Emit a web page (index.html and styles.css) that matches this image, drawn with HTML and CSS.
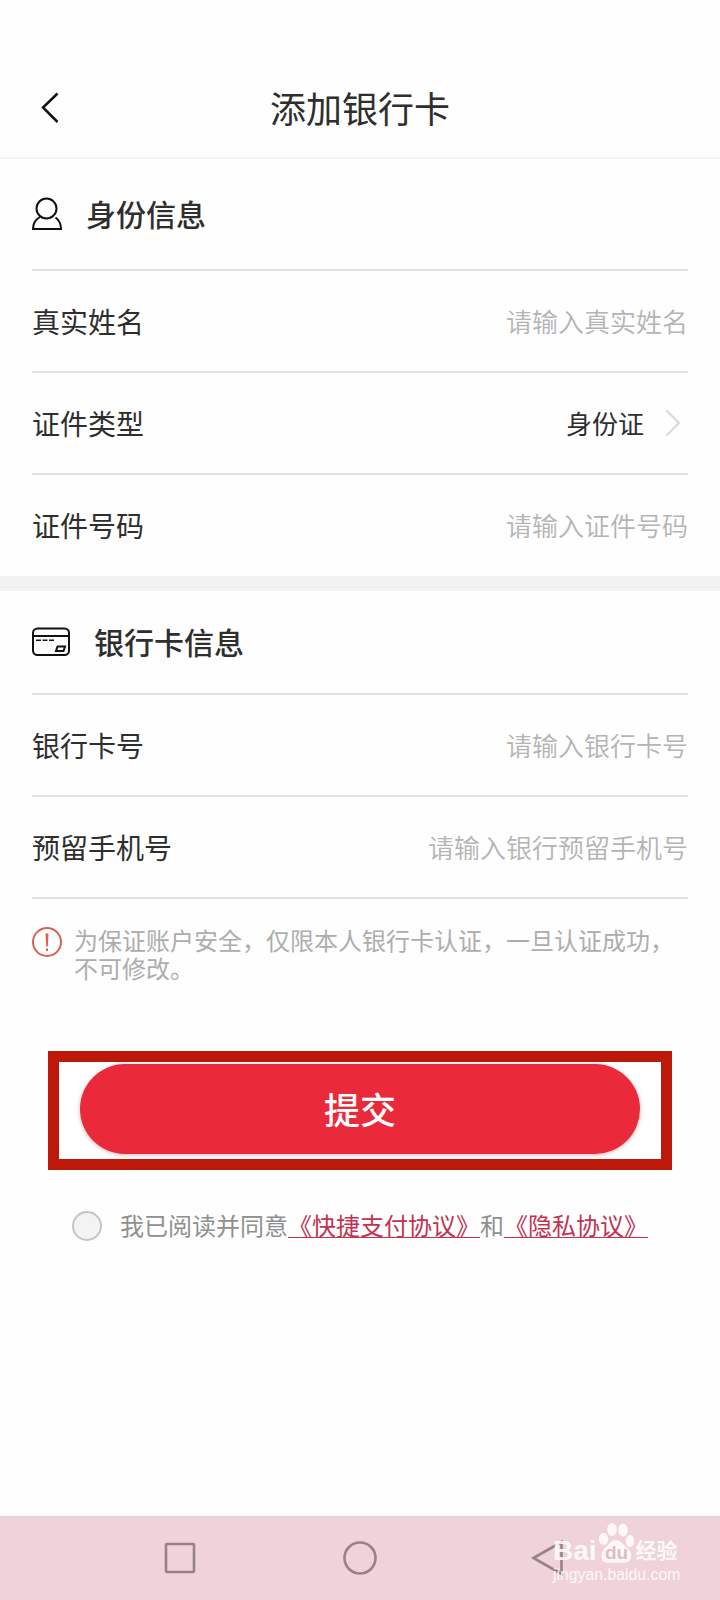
FILE: index.html
```html
<!DOCTYPE html>
<html lang="zh-CN">
  <head>
    <meta charset="UTF-8" />
    <meta name="viewport" content="width=device-width, initial-scale=1.0" />
    <title>添加银行卡</title>
    <link rel="stylesheet" href="styles.css">
  </head>
  <body>
    <header class="header">
      <a class="back" href="#">
        <svg width="20" height="32" viewBox="0 0 20 32">
          <path d="M17.500 1.500 L3 15.500 L17.500 30" />
        </svg>
      </a>
      <h1>添加银行卡</h1>
    </header>

    <main>
      <section class="group">
        <h2 class="group-title">
          <svg class="icon-user" width="30" height="34" viewBox="0 0 30 34">
            <circle cx="14.500" cy="11.500" r="10" />
            <path d="M8 20 C3.500 22.500 1 26.500 1 32 H29 C29 27 27 23 23.500 20.500" />
          </svg>
          <span>身份信息</span>
        </h2>
        <div class="row">
          <label>真实姓名</label>
          <span class="placeholder">请输入真实姓名</span>
        </div>
        <div class="row">
          <label>证件类型</label>
          <span class="value">身份证</span>
          <svg class="arrow" width="16" height="28" viewBox="0 0 16 28">
            <path d="M1.500 1.500 L14 14 L1.500 26.500" />
          </svg>
        </div>
        <div class="row">
          <label>证件号码</label>
          <span class="placeholder">请输入证件号码</span>
        </div>
      </section>

      <section class="group">
        <h2 class="group-title card-title">
          <svg class="icon-card" width="38" height="30" viewBox="0 0 38 30">
            <rect x="1" y="1.500" width="36" height="26.500" rx="4.500" />
            <path d="M1 9 H37" />
            <path class="thin" d="M4 13.300 H9 M10.500 13.300 H15.500 M17 13.300 H22" />
            <path d="M25.500 19.500 H33 L31.500 24 H24 Z" />
          </svg>
          <span>银行卡信息</span>
        </h2>
        <div class="row">
          <label>银行卡号</label>
          <span class="placeholder">请输入银行卡号</span>
        </div>
        <div class="row">
          <label>预留手机号</label>
          <span class="placeholder">请输入银行预留手机号</span>
        </div>
      </section>

      <div class="notice">
        <svg width="30" height="30" viewBox="0 0 30 30">
          <circle cx="15" cy="15" r="14" />
          <path d="M13.500 6.500 H16.500 L15.800 19.500 H14.200 Z" />
          <rect x="14" y="21.500" width="2" height="2.500" />
        </svg>
        <p>为保证账户安全，仅限本人银行卡认证，一旦认证成功，<br />不可修改。</p>
      </div>

      <div class="submit-box">
        <button class="submit">提交</button>
      </div>

      <div class="agreement">
        <span class="radio"></span>
        <p>我已阅读并同意<a href="#">《快捷支付协议》</a>和<a href="#">《隐私协议》</a></p>
      </div>
    </main>

    <footer class="nav-bar">
      <svg width="34" height="36" viewBox="0 0 34 36">
        <rect x="3" y="4" width="28" height="28" rx="1" />
      </svg>
      <svg width="34" height="36" viewBox="0 0 34 36">
        <circle cx="17" cy="18" r="15.500" />
      </svg>
      <svg width="34" height="36" viewBox="0 0 34 36">
        <path d="M10.500 18 L38.500 2 V34 Z" />
      </svg>

      <div class="watermark">
        <div class="brand">
          <span class="brand-en">Bai</span>
          <svg width="36" height="42" viewBox="0 0 36 42">
            <ellipse cx="5.500" cy="17" rx="4.800" ry="6" />
            <ellipse cx="14" cy="7.500" rx="4.800" ry="6.500" />
            <ellipse cx="25" cy="8" rx="4.800" ry="6.500" />
            <ellipse cx="32" cy="19" rx="4.300" ry="6" />
            <path d="M18 18 C22 18 24 21 27 24 C31 27 34 30 33 35 C32 42 25 41 18 40.500 C11 41 4 42 3.500 35 C3 30 6 27 9 24 C12 21 14 18 18 18 Z" />
            <text x="18.500" y="36.500" text-anchor="middle">du</text>
          </svg>
          <span class="brand-cn">经验</span>
        </div>
        <div class="site">jingyan.baidu.com</div>
      </div>
    </footer>
  </body>
</html>
```
FILE: styles.css
```css
* {
  box-sizing: border-box;
}

body {
  display: flex;
  flex-direction: column;
  height: 1600px;
  margin: 0;
  background-color: #fefefe;
  color: #2e2e2e;
  font-family: 'Noto Sans CJK SC', sans-serif;
}

h1,
h2,
p {
  margin: 0;
  font-weight: 400;
}

svg {
  display: block;
  flex: none;
  fill: none;
}

/* 標題列 */
.header {
  display: grid;
  grid-template-columns: 100px 1fr 100px;
  align-items: center;
  height: 159px;
  padding-top: 58px;
  border-bottom: 2px solid #f5f5f5;
}

.back {
  padding-left: 40px;
}

.back svg {
  stroke: #111;
  stroke-width: 2.5;
}

.header h1 {
  padding-bottom: 2px;
  text-align: center;
  font-size: 36px;
  line-height: 50px;
}

/* 表單 */
.group {
  padding: 0 32px;
}

.group + .group {
  border-top: 15px solid #f2f2f2;
}

.group-title {
  display: flex;
  align-items: center;
  gap: 24px;
  height: 112px;
  border-bottom: 2px solid #e2e2e2;
  font-size: 30px;
  font-weight: 500;
}

.group-title span {
  padding-bottom: 3px;
}

.card-title {
  height: 104px;
}

.icon-user,
.icon-card {
  stroke: #111;
  stroke-width: 2;
}

.icon-card .thin {
  stroke-width: 1.6;
}

.row {
  display: flex;
  align-items: center;
  height: 102px;
  border-bottom: 2px solid #e2e2e2;
  font-size: 28px;
}

.group:first-child .row:last-child {
  height: 101px;
  padding-bottom: 1px;
  border-bottom: none;
}

.placeholder,
.value {
  margin-left: auto;
  padding-bottom: 2px;
  font-size: 26px;
}

.placeholder {
  color: #b4b4b4;
  font-weight: 350;
}

.arrow {
  margin: 0 7px 0 21px;
  stroke: #d8d8d8;
  stroke-width: 2;
}

/* 提示 */
.notice {
  display: flex;
  gap: 12px;
  padding: 28px 0 0 32px;
  color: #adadad;
  font-size: 24px;
  font-weight: 300;
  line-height: 28px;
  white-space: nowrap;
}

.notice p {
  margin-top: -1px;
}

.notice svg {
  stroke: #d9614f;
  stroke-width: 2;
}

.notice path,
.notice rect {
  fill: #d9614f;
  stroke: none;
}

/* 送出按鈕 */
.submit-box {
  height: 119px;
  margin: 69px 48px 0;
  padding: 2px 21px;
  border: 11px solid #bc190b;
  background-color: #fff;
}

.submit {
  display: block;
  width: 100%;
  height: 90px;
  padding: 0 0 3px;
  border: none;
  border-radius: 45px;
  background-color: #ea2a3a;
  box-shadow: 0 1px 4px rgba(150, 50, 50, 0.35);
  color: #fff;
  font-family: inherit;
  font-size: 36px;
  font-weight: 500;
}

/* 協議 */
.agreement {
  display: flex;
  align-items: center;
  gap: 18px;
  margin: 38px 0 0 72px;
  color: #8f8f8f;
  font-size: 24px;
  font-weight: 300;
  line-height: 36px;
  white-space: nowrap;
}

.agreement p {
  margin-top: -1px;
}

.radio {
  width: 30px;
  height: 30px;
  border: 2px solid #c4c4c4;
  border-radius: 50%;
  background-color: #f3f3f3;
}

.agreement a {
  color: #c23350;
  text-decoration: underline;
  text-decoration-thickness: 1px;
  text-underline-offset: 2px;
}

/* 底部導覽 */
.nav-bar {
  position: relative;
  display: flex;
  justify-content: center;
  gap: 146px;
  height: 84px;
  margin-top: auto;
  padding-top: 22px;
  border-top: 2px solid #e3d1d5;
  background-color: #efd3d9;
}

.nav-bar > svg {
  overflow: visible;
  stroke: #96838a;
  stroke-width: 2.6;
}

/* 浮水印 */
.watermark {
  position: absolute;
  top: 4px;
  left: 553px;
  color: rgba(255, 255, 255, 0.85);
  font-family: 'Liberation Sans', 'Noto Sans CJK SC', sans-serif;
}

.brand {
  display: flex;
  align-items: flex-end;
  height: 42px;
  font-size: 28px;
  font-weight: 700;
  line-height: 32px;
}

.brand-en {
  position: relative;
  top: 3px;
}

.brand svg {
  margin: 0 2px 0 1px;
  fill: #fff8fa;
}

.brand text {
  fill: #dfbcc5;
  font-size: 19px;
}

.brand-cn {
  position: relative;
  top: 3px;
  font-size: 21px;
}

.site {
  font-size: 15.8px;
  line-height: 22px;
}
```
